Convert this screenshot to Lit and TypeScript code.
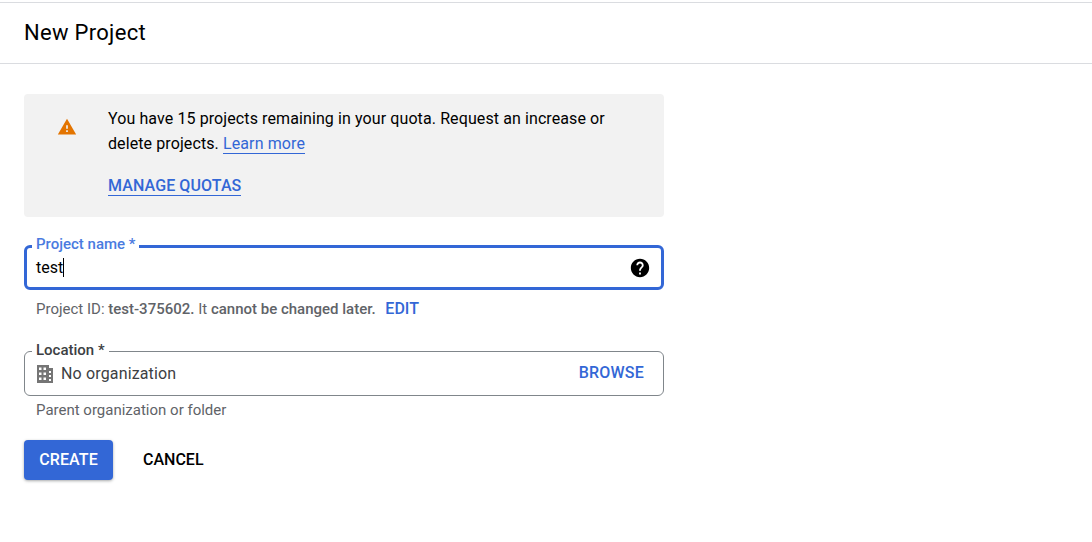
import { LitElement, html, css } from "lit";
import { customElement } from "lit/decorators.js";

@customElement("app-root")
export class AppRoot extends LitElement {
  static styles = css`
    :host {
      display: block;
      width: 1092px;
      height: 542px;
      background: #fff;
      font-family: Roboto, "Liberation Sans", sans-serif;
      color: #000;
      overflow: hidden;
      padding-top: 2px;
      box-sizing: border-box;
    }
    .header {
      height: 60px;
      border-top: 1px solid #dadce0;
      border-bottom: 1px solid #dadce0;
      padding-left: 24px;
      display: flex;
      align-items: center;
      font-size: 22px;
      line-height: 28px;
      letter-spacing: 0.3px;
    }
    .content {
      width: 640px;
      margin-left: 24px;
      padding-top: 30px;
      display: flex;
      flex-direction: column;
    }
    .banner {
      height: 123px;
      box-sizing: border-box;
      background: #f2f2f2;
      border-radius: 4px;
      display: flex;
      padding-top: 12px;
    }
    .warn {
      width: 20px;
      height: 20px;
      margin: 11px 0 0 33px;
      fill: #e37400;
      flex: none;
    }
    .bannertext {
      margin-left: 31px;
      width: 510px;
      font-size: 16px;
      line-height: 25px;
      letter-spacing: 0.1px;
    }
    a {
      color: #3367d6;
      text-decoration: none;
    }
    .learn {
      border-bottom: 1px solid #3367d6;
    }
    .manage {
      display: inline-block;
      margin-top: 20px;
      font-weight: 500;
      line-height: 19px;
      border-bottom: 1px solid #3367d6;
    }
    .field {
      position: relative;
      box-sizing: border-box;
      display: flex;
      align-items: center;
      border-radius: 6px;
      background: #fff;
    }
    .name {
      margin-top: 28px;
      height: 45px;
      border: 3px solid #3367d6;
      padding: 0 12px 0 9px;
      font-size: 16px;
    }
    .caret {
      width: 1px;
      height: 19px;
      background: #000;
    }
    .label {
      position: absolute;
      left: 5px;
      top: -12px;
      background: #fff;
      padding: 0 4px;
      font-size: 15px;
      line-height: 16px;
      font-weight: 500;
    }
    .name .label {
      color: #4a7bdf;
    }
    .help {
      width: 22px;
      height: 22px;
      margin-left: auto;
      margin-right: -2px;
      fill: #000;
    }
    .hint {
      margin-left: 12px;
      font-size: 15px;
      line-height: 18px;
      color: #5f6368;
    }
    .hint1 {
      margin-top: 10px;
    }
    .hint b {
      font-weight: 500;
    }
    .edit {
      font-weight: 500;
      font-size: 16px;
      margin-left: 6px;
    }
    .location {
      margin-top: 33px;
      height: 45px;
      border: 1px solid #80868b;
      padding: 0 19px 0 11px;
      font-size: 16px;
      letter-spacing: 0.15px;
      color: #3c4043;
    }
    .location .label {
      left: 7px;
      top: -10px;
      color: #3c4043;
      letter-spacing: 0;
    }
    .domain {
      width: 18px;
      height: 18px;
      fill: #757575;
      margin: 0 7px 0 0;
    }
    .browse {
      margin-left: auto;
      padding-bottom: 2px;
      font-weight: 500;
      letter-spacing: 0.2px;
    }
    .hint2 {
      margin-top: 5px;
    }
    .actions {
      margin-top: 21px;
      display: flex;
      align-items: center;
      font-size: 16px;
      font-weight: 500;
    }
    .create {
      width: 89px;
      height: 40px;
      box-sizing: border-box;
      padding-bottom: 2px;
      display: flex;
      align-items: center;
      justify-content: center;
      background: #3367d6;
      color: #fff;
      letter-spacing: 0.1px;
      border-radius: 4px;
      box-shadow: 0 1px 3px rgba(60, 64, 67, 0.45);
    }
    .cancel {
      margin-left: 30px;
      padding-bottom: 2px;
    }
  `;

  render() {
    return html`
      <div class="header">New Project</div>
      <div class="content">
        <div class="banner">
          <svg class="warn" viewBox="0 0 24 24"><path d="M1 21h22L12 2 1 21zm12-3h-2v-2h2v2zm0-4h-2v-4h2v4z"></path></svg>
          <div class="bannertext">
            You have 15 projects remaining in your quota. Request an increase or delete projects.
            <a class="learn" href="#">Learn more</a><br />
            <a class="manage" href="#">MANAGE QUOTAS</a>
          </div>
        </div>
        <div class="field name">
          <span class="label">Project name *</span>
          <span>test</span><span class="caret"></span>
          <svg class="help" viewBox="0 0 24 24"><path d="M12 2C6.48 2 2 6.48 2 12s4.48 10 10 10 10-4.48 10-10S17.52 2 12 2zm1 17h-2v-2h2v2zm2.07-7.75l-.9.92C13.45 12.9 13 13.5 13 15h-2v-.5c0-1.1.45-2.1 1.17-2.83l1.24-1.26c.37-.36.59-.86.59-1.41 0-1.1-.9-2-2-2s-2 .9-2 2H8c0-2.21 1.79-4 4-4s4 1.79 4 4c0 .88-.36 1.68-.93 2.25z"></path></svg>
        </div>
        <div class="hint hint1">
          Project ID: <b>test-375602.</b> It <b>cannot be changed later.</b>
          <a class="edit" href="#">EDIT</a>
        </div>
        <div class="field location">
          <span class="label">Location *</span>
          <svg class="domain" viewBox="0 0 18 18"><path fill-rule="evenodd" d="M1 0h12v3h4v15H1zM3 2.500v2.500h2.500V2.500zM7.500 2.500v2.500H10V2.500zM3 7.500V10h2.500V7.500zM7.500 7.500V10H10V7.500zM3 12.500V15h2.500v-2.500zM7.500 12.500V15H10v-2.500zM13 6v2h2V6zM13 10v2h2v-2zM13 14v2h2v-2z"></path></svg>
          <span>No organization</span>
          <a class="browse" href="#">BROWSE</a>
        </div>
        <div class="hint hint2">Parent organization or folder</div>
        <div class="actions">
          <div class="create">CREATE</div>
          <div class="cancel">CANCEL</div>
        </div>
      </div>
    `;
  }
}
